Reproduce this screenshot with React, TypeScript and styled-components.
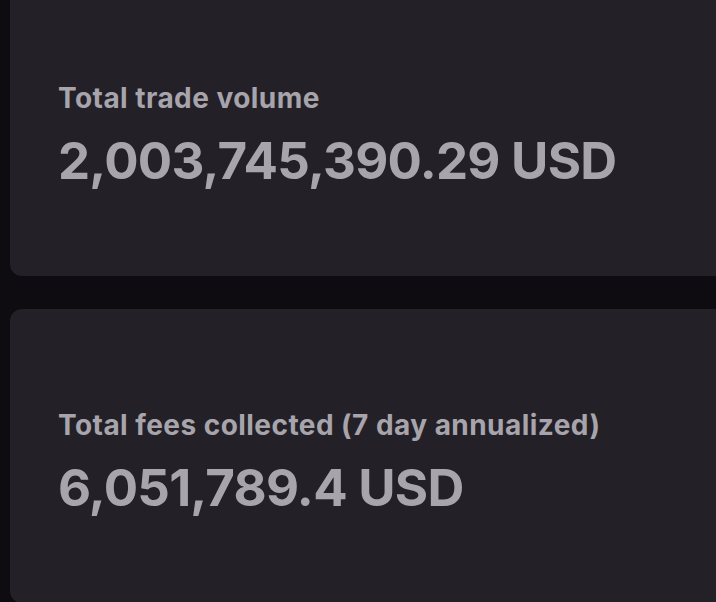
import React from "react";
import styled, { createGlobalStyle } from "styled-components";

const Global = createGlobalStyle`
  html, body {
    margin: 0;
    padding: 0;
    background: #0e0c11;
    overflow: hidden;
  }
  body {
    font-family: Inter, "Noto Sans", "Liberation Sans", sans-serif;
  }
`;

const Page = styled.div`
  display: flex;
  flex-direction: column;
  gap: 33px;
  padding-left: 10px;
  margin-top: -18px;
  width: 760px;
`;

const Card = styled.section`
  box-sizing: border-box;
  height: 294px;
  background: #232127;
  border-radius: 12px;
  padding: 100px 0 0 48px;
  display: flex;
  flex-direction: column;
  gap: 14px;
`;

const Label = styled.div`
  font-size: 28px;
  font-weight: 700;
  line-height: 1.21;
  letter-spacing: 0.45px;
  color: #a7a4ac;
`;

const Value = styled.div`
  font-size: 51px;
  font-weight: 700;
  line-height: 1.21;
  letter-spacing: -0.75px;
  color: #a7a4ac;
`;

const stats = [
  { label: "Total trade volume", value: "2,003,745,390.29 USD" },
  { label: "Total fees collected (7 day annualized)", value: "6,051,789.4 USD" },
];

export default function App() {
  return (
    <>
      <Global />
      <Page>
        {stats.map((s) => (
          <Card key={s.label}>
            <Label>{s.label}</Label>
            <Value>{s.value}</Value>
          </Card>
        ))}
      </Page>
    </>
  );
}
